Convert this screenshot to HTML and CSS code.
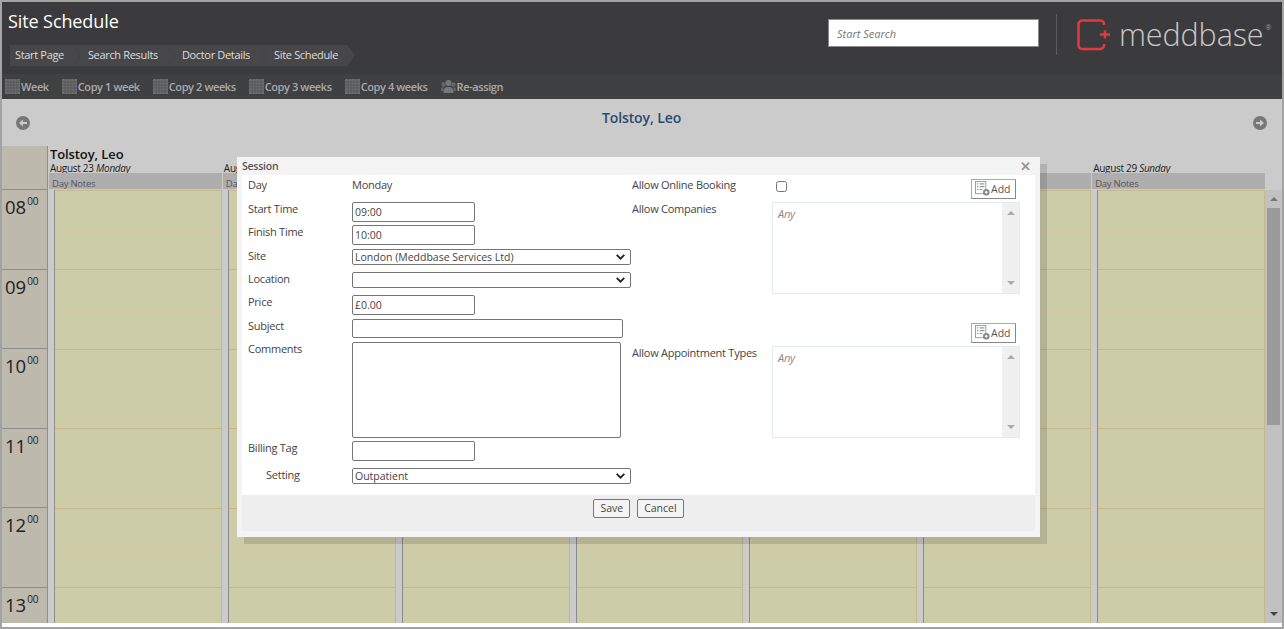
FILE: index.html
```html
<!DOCTYPE html>
<html lang="en">
<head>
    <meta charset="UTF-8">
    <meta name="viewport" content="width=device-width, initial-scale=1.0">
    <title>Site Schedule</title>
    <link rel="stylesheet" href="styles.css">
</head>
<body>

<svg class="defs" width="0" height="0">
    <defs>
        <symbol id="grid" viewBox="0 0 15 15">
            <rect width="15" height="15" fill="#6e6e6e"/>
            <path d="M0 3h15M0 6h15M0 9h15M0 12h15M3 0v15M6 0v15M9 0v15M12 0v15" stroke="#58585a" stroke-width="1"/>
        </symbol>
        <symbol id="listadd" viewBox="0 0 16 16">
            <rect x="0.5" y="0.5" width="11" height="13" fill="#fff" stroke="#999"/>
            <path d="M2 3h1.500M5 3h5M2 6h1.500M5 6h5M2 9h1.500M5 9h3" stroke="#8a98a6" stroke-width="1.200"/>
            <circle cx="12" cy="12" r="3.500" fill="#888"/>
            <circle cx="12" cy="12" r="1.300" fill="#fff"/>
        </symbol>
    </defs>
</svg>

<div class="page">
    <header class="top">
        <div class="top-left">
            <h1>Site Schedule</h1>
            <nav class="crumbs">
                <a>Start Page</a>
                <a>Search Results</a>
                <a>Doctor Details</a>
                <a>Site Schedule</a>
            </nav>
        </div>
        <div class="search-box">
            <input class="search" type="text" placeholder="Start Search">
        </div>
        <div class="logo">
            <svg width="34" height="32" viewBox="0 0 34 32">
                <path d="M27 6V5a3.500 3.500 0 0 0-3.500-3.500H5A3.500 3.500 0 0 0 1.500 5V26.500A3.500 3.500 0 0 0 5 30H23.500A3.500 3.500 0 0 0 27 26.500V25" fill="none" stroke="#e8383f" stroke-width="2.500"/>
                <path d="M28 11.500v8M23 15.500h10" stroke="#e8383f" stroke-width="2.500"/>
            </svg>
            <span class="logo-name">meddbase</span><span class="logo-mark">®</span>
        </div>
    </header>

    <div class="toolbar">
        <a><svg><use href="#grid"/></svg>Week</a>
        <a><svg><use href="#grid"/></svg>Copy 1 week</a>
        <a><svg><use href="#grid"/></svg>Copy 2 weeks</a>
        <a><svg><use href="#grid"/></svg>Copy 3 weeks</a>
        <a><svg><use href="#grid"/></svg>Copy 4 weeks</a>
        <a>
            <svg viewBox="0 0 15 15">
                <circle cx="7.500" cy="4" r="3" fill="#777"/>
                <path d="M2.500 14c0-5 1.500-6 5-6s5 1 5 6z" fill="#777"/>
                <circle cx="2.500" cy="5.500" r="2.200" fill="#666"/>
                <circle cx="12.500" cy="5.500" r="2.200" fill="#666"/>
                <path d="M0 12c0-3 1-4 2.500-4v4zM15 12c0-3-1-4-2.500-4v4z" fill="#666"/>
            </svg>Re-assign
        </a>
    </div>

    <main class="schedule">
        <div class="person-bar">
            <svg class="nav-arrow" viewBox="0 0 14 14"><circle cx="7" cy="7" r="7" fill="#777"/><path d="M3 7l4-3.500V6h4v2H7v2.500z" fill="#cbcbcb"/></svg>
            <h2>Tolstoy, Leo</h2>
            <svg class="nav-arrow" viewBox="0 0 14 14"><circle cx="7" cy="7" r="7" fill="#777"/><path d="M11 7L7 3.500V6H3v2h4v2.500z" fill="#cbcbcb"/></svg>
        </div>

        <div class="head-row">
            <div class="corner"></div>
            <div class="day-head">
                <div class="doctor">Tolstoy, Leo</div>
                <div class="date">August 23 <em>Monday</em></div>
                <div class="notes">Day Notes</div>
            </div>
            <div class="day-head">
                <div class="date">Aug</div>
                <div class="notes">Day</div>
            </div>
            <div class="day-head"><div class="notes"></div></div>
            <div class="day-head"><div class="notes"></div></div>
            <div class="day-head"><div class="notes"></div></div>
            <div class="day-head"><div class="notes"></div></div>
            <div class="day-head">
                <div class="date">August 29 <em>Sunday</em></div>
                <div class="notes">Day Notes</div>
            </div>
            <div class="head-end"></div>
        </div>

        <div class="body-row">
            <div class="hours">
                <div class="hour">08<sup>00</sup></div>
                <div class="hour">09<sup>00</sup></div>
                <div class="hour">10<sup>00</sup></div>
                <div class="hour">11<sup>00</sup></div>
                <div class="hour">12<sup>00</sup></div>
                <div class="hour">13<sup>00</sup></div>
            </div>
            <div class="day"></div>
            <div class="day"></div>
            <div class="day"></div>
            <div class="day"></div>
            <div class="day"></div>
            <div class="day"></div>
            <div class="day"></div>
            <div class="scrollbar">
                <span class="sb-up"></span>
                <span class="sb-thumb"></span>
                <span class="sb-down"></span>
            </div>
        </div>
    </main>
    <div class="foot-line"></div>
</div>

<div class="modal">
    <div class="modal-title">
        <span>Session</span>
        <span class="modal-close">✕</span>
    </div>
    <form class="modal-body">
        <div class="col-left">
            <div class="row r-day"><label>Day</label><span>Monday</span></div>
            <div class="row r-start"><label>Start Time</label><input class="short" type="text" value="09:00"></div>
            <div class="row r-finish"><label>Finish Time</label><input class="short" type="text" value="10:00"></div>
            <div class="row r-site"><label>Site</label>
                <select class="wide"><option>London (Meddbase Services Ltd)</option></select>
            </div>
            <div class="row r-loc"><label>Location</label>
                <select class="wide"><option></option></select>
            </div>
            <div class="row r-price"><label>Price</label><input class="short" type="text" value="£0.00"></div>
            <div class="row r-subject"><label>Subject</label><input class="subject" type="text"></div>
            <div class="row r-comments"><label>Comments</label><textarea></textarea></div>
            <div class="row r-billing"><label>Billing Tag</label><input class="short" type="text"></div>
            <div class="row r-setting"><label class="indent">Setting</label>
                <select class="wide"><option>Outpatient</option></select>
            </div>
        </div>
        <div class="col-right">
            <div class="row-right r-online">
                <label>Allow Online Booking</label>
                <input type="checkbox">
                <button type="button" class="add"><svg><use href="#listadd"/></svg>Add</button>
            </div>
            <div class="row-right r-list">
                <label>Allow Companies</label>
                <div class="listbox"><i>Any</i><span class="lb-scroll"><b class="up"></b><b class="down"></b></span></div>
            </div>
            <div class="add-line">
                <button type="button" class="add"><svg><use href="#listadd"/></svg>Add</button>
            </div>
            <div class="row-right r-list">
                <label>Allow Appointment Types</label>
                <div class="listbox"><i>Any</i><span class="lb-scroll"><b class="up"></b><b class="down"></b></span></div>
            </div>
        </div>
    </form>
    <div class="modal-foot">
        <button type="button">Save</button>
        <button type="button">Cancel</button>
    </div>
</div>

</body>
</html>
```

FILE: styles.css
```css
* {
    box-sizing: border-box;
}
html, body {
    margin: 0;
    height: 100%;
    overflow: hidden;
}
body {
    font-family: "Open Sans", "Noto Sans", sans-serif;
    font-size: 11px;
    color: #444;
    background: #a3a3a3;
    padding: 2px;
    letter-spacing: -0.25px;
}
.defs {
    position: absolute;
}
.page {
    height: 625px;
    display: flex;
    flex-direction: column;
    background: #cbcbcb;
}

/* header */
.top {
    height: 72px;
    background: #3b3b3d;
    display: flex;
    align-items: flex-start;
}
.top-left {
    flex: 1;
    padding: 7px 0 0 6px;
}
h1 {
    margin: 0;
    font-size: 18px;
    line-height: 24px;
    font-weight: 400;
    letter-spacing: -0.1px;
    color: #fff;
}
.crumbs {
    display: flex;
    margin: 12px 0 0 2px;
}
.crumbs a {
    height: 21px;
    line-height: 20px;
    padding: 0 17px 0 15px;
    margin-right: -8px;
    color: #ddd;
    background: #474749;
    letter-spacing: -0.33px;
    clip-path: polygon(0 0, calc(100% - 8px) 0, 100% 50%, calc(100% - 8px) 100%, 0 100%, 8px 50%);
}
.crumbs a:first-child {
    padding-left: 5px;
    clip-path: polygon(0 0, calc(100% - 8px) 0, 100% 50%, calc(100% - 8px) 100%, 0 100%);
}
.search-box {
    padding: 17px 17px 0 0;
}
.logo {
    width: 226px;
    height: 41px;
    margin-top: 12px;
    border-left: 1px solid #5c5c5e;
    display: flex;
    align-items: center;
    padding-left: 20px;
}
.logo-name {
    margin-left: 8px;
    font: 300 30.500px/41px "Open Sans", sans-serif;
    letter-spacing: -0.1px;
    color: #c8c8c8;
}
.logo-mark {
    font-size: 7px;
    align-self: flex-start;
    margin: 9px 0 0 2px;
    color: #999;
}

/* toolbar */
.toolbar {
    height: 25px;
    background: #3f4042;
    display: flex;
    align-items: center;
    padding-left: 3px;
    gap: 13px;
    font-weight: 600;
    letter-spacing: -0.4px;
    color: #aaa;
}
.toolbar a {
    display: flex;
    align-items: center;
    gap: 1px;
}
.toolbar svg {
    width: 15px;
    height: 15px;
}

/* schedule */
.schedule {
    flex: 1;
    min-height: 0;
    display: flex;
    flex-direction: column;
    overflow: hidden;
}
.person-bar {
    height: 47px;
    display: flex;
    justify-content: space-between;
    align-items: flex-start;
    padding: 17px 15px 0 14px;
}
.person-bar h2 {
    margin: -8px 0 0;
    font-size: 14px;
    line-height: 20px;
    font-weight: 600;
    letter-spacing: -0.1px;
    color: #2b4a6f;
}
.nav-arrow {
    width: 14px;
    height: 14px;
}
.head-row {
    height: 44px;
    display: flex;
}
.corner {
    width: 46px;
    background: #bdb9ad;
    border-right: 1px solid #8f8f8f;
    border-bottom: 1px solid #8f8f8f;
}
.head-end {
    width: 17px;
}
.day-head {
    flex: 1;
    min-width: 0;
    display: flex;
    flex-direction: column;
    justify-content: flex-end;
    padding-bottom: 1px;
}
.doctor {
    padding-left: 2px;
    font-size: 13px;
    font-weight: 600;
    letter-spacing: -0.1px;
    color: #111;
    line-height: 16px;
}
.date {
    font-size: 10px;
    line-height: 13px;
    margin-bottom: -2px;
    color: #222;
    padding-left: 2px;
    white-space: nowrap;
    letter-spacing: -0.3px;
}
.notes {
    height: 16px;
    line-height: 15px;
    background: #aeaeae;
    margin-left: 1px;
    padding: 3px 0 0 3px;
    font-size: 9.500px;
    color: #555;
}
.body-row {
    flex: 1;
    min-height: 0;
    display: flex;
    background: #cbcbcb;
}
.hours {
    width: 46px;
    background: #bdb9ad;
    border-right: 1px solid #8f8f8f;
}
.hour {
    height: 79.500px;
    border-bottom: 1px solid #8f8f8f;
    padding: 3px 0 0 3px;
    font-size: 18.500px;
    line-height: 28px;
    color: #222;
    letter-spacing: 0;
}
.hour sup {
    margin-left: 1px;
    font-size: 10px;
    line-height: 0;
    vertical-align: 9px;
}
.day {
    flex: 1;
    min-width: 0;
    margin-left: 6px;
    border-left: 1px solid #8c8c8c;
    border-right: 1px solid #c6b78d;
    background-color: #cccca9;
    background-image: repeating-linear-gradient(
        to bottom,
        #c6b78d 0, #c6b78d 0.600px,
        transparent 0.600px, transparent 40px,
        #d2c8a2 40px, #d2c8a2 41px,
        transparent 41px, transparent 79.100px,
        #c6b78d 79.100px, #c6b78d 79.500px
    );
}
.scrollbar {
    width: 17px;
    background: #c1c1c1;
    display: flex;
    flex-direction: column;
    align-items: center;
}
.sb-up, .sb-down {
    width: 0;
    height: 0;
    border-left: 4px solid transparent;
    border-right: 4px solid transparent;
}
.sb-up {
    border-bottom: 4px solid #777;
    margin-top: 7px;
}
.sb-down {
    border-top: 4px solid #444;
    margin-top: auto;
    margin-bottom: 7px;
}
.sb-thumb {
    width: 13px;
    height: 217px;
    margin-top: 7px;
    background: #9a9a9a;
}
.foot-line {
    height: 4px;
    background: #fff;
}

/* session dialog */
.modal {
    position: absolute;
    left: 237px;
    top: 157px;
    width: 803px;
    height: 380px;
    padding: 0 5px 6px;
    background: #f4f4f4;
    box-shadow: 7px 7px 0 rgba(0, 0, 0, 0.12);
    display: flex;
    flex-direction: column;
}
.modal-title {
    height: 18px;
    line-height: 18px;
    display: flex;
    justify-content: space-between;
    font-size: 10.500px;
    font-weight: 600;
    color: #555;
}
.modal-close {
    color: #999;
    font-size: 13px;
    font-weight: 700;
    margin-right: 4px;
}
.modal-body {
    height: 320px;
    background: #fff;
    display: flex;
}
.col-left {
    width: 390px;
    padding-left: 6px;
}
.row {
    display: flex;
    align-items: flex-start;
}
.row label {
    width: 104px;
    line-height: 16px;
    margin-top: -1px;
    flex: none;
}
.row label.indent {
    padding-left: 18px;
}
.r-day { height: 27px; padding-top: 2px; }
.r-day label { margin-top: 0; }
.r-day span { line-height: 16px; }
.r-start { height: 23px; }
.r-finish { height: 24px; }
.r-site { height: 23px; }
.r-loc { height: 23px; }
.r-price { height: 24px; }
.r-subject { height: 23px; }
.r-comments { height: 99px; }
.r-billing { height: 27px; }
input[type=text], textarea, select {
    font: 10.500px "Open Sans", sans-serif;
    color: #444;
    border: 1px solid #767676;
    border-radius: 2px;
    background: #fff;
    margin: 0;
    padding: 0 2px;
}
input[type=text].search {
    display: block;
    width: 211px;
    height: 28px;
    padding: 0 8px;
    border: 1px solid #8a8a8a;
    border-radius: 0;
    font: italic 11px "Open Sans", sans-serif;
}
.search::placeholder {
    color: #777;
}
.short {
    width: 123px;
    height: 20px;
}
select.wide {
    appearance: none;
    width: 279px;
    height: 16px;
    padding: 0 16px 0 2px;
    line-height: 13px;
    background: #fff url("data:image/svg+xml,%3Csvg xmlns='http://www.w3.org/2000/svg' width='9' height='6'%3E%3Cpath d='M.7.9l3.800 3.800L8.300.9' fill='none' stroke='%23222' stroke-width='1.800'/%3E%3C/svg%3E") no-repeat right 5px center;
}
.subject {
    width: 271px;
    height: 19px;
}
textarea {
    width: 269px;
    height: 96px;
    resize: none;
}
.col-right {
    flex: 1;
}
.row-right {
    display: flex;
    align-items: flex-start;
}
.row-right label {
    width: 140px;
    flex: none;
    line-height: 16px;
}
.r-online {
    height: 27px;
    padding-top: 2px;
}
.r-online input {
    width: 11px;
    height: 11px;
    margin: 4px 0 0 4px;
}
.r-online .add {
    margin: 2px 0 0 184px;
}
.add {
    width: 45px;
    height: 20px;
    padding: 0 0 1px 3px;
    display: flex;
    align-items: center;
    gap: 1px;
    background: #fff;
    border: 1px solid #aaa;
    border-bottom-color: #888;
    border-right-color: #888;
    font: 10.500px "Open Sans", sans-serif;
    color: #555;
}
.add svg {
    width: 15px;
    height: 15px;
    flex: none;
}
.r-list {
    height: 92px;
}
.r-list label {
    margin-top: -1px;
}
.add-line {
    height: 52px;
    padding: 29px 0 0 339px;
}
.listbox {
    width: 248px;
    height: 92px;
    border: 1px solid #e3e9ee;
    display: flex;
    justify-content: space-between;
    font-size: 11px;
    color: #888;
}
.listbox i {
    padding: 3px 5px;
}
.lb-scroll {
    width: 17px;
    background: #f0f0f0;
    display: flex;
    flex-direction: column;
    justify-content: space-between;
    align-items: center;
    padding: 8px 0;
}
.lb-scroll b {
    width: 0;
    height: 0;
    border-left: 4px solid transparent;
    border-right: 4px solid transparent;
}
.lb-scroll .up {
    border-bottom: 4px solid #aaa;
}
.lb-scroll .down {
    border-top: 4px solid #aaa;
}
.modal-foot {
    flex: 1;
    background: #eee;
    display: flex;
    justify-content: center;
    align-items: flex-start;
    gap: 7px;
    padding-top: 4px;
}
.modal-foot button {
    height: 19px;
    padding: 0 6px 2px;
    background: #f4f4f4;
    border: 1px solid #777;
    border-radius: 2px;
    font: 10.500px "Open Sans", sans-serif;
    color: #444;
}
```
